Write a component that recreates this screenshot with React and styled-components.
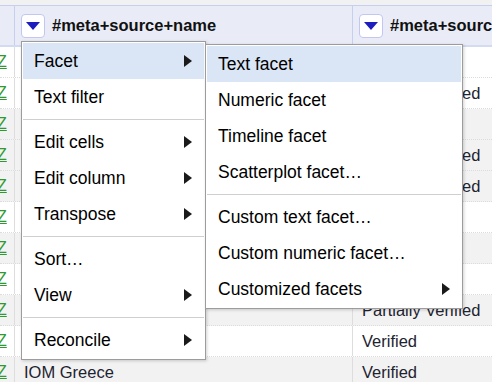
import React from 'react';
import styled, { createGlobalStyle } from 'styled-components';

const Global = createGlobalStyle`
  html, body { margin: 0; padding: 0; background: #fff; overflow: hidden; }
  body { font-family: "Liberation Sans", Arial, sans-serif; }
`;

const Page = styled.div`
  position: relative;
  width: 492px;
  height: 382px;
  overflow: hidden;
  background: #fff;
`;

const TopStrip = styled.div`
  height: 5px;
  background: #f1f1f1;
`;

const HeaderRow = styled.div`
  display: grid;
  grid-template-columns: 15px 338px 1fr;
  height: 42px;
  box-sizing: border-box;
  background: #e9ecf7;
  border-top: 1px solid #c6cff0;
  border-bottom: 2px solid #d3dbf3;
`;

const HeaderCell = styled.div`
  display: flex;
  align-items: center;
  gap: 7px;
  padding-left: 6px;
  border-right: ${p => (p.$last ? 'none' : '1px solid #c6cff0')};
  white-space: nowrap;
  overflow: hidden;
  font-weight: bold;
  font-size: 16.5px;
  color: #111;
`;

const DropButton = styled.span`
  flex: none;
  display: flex;
  align-items: center;
  justify-content: center;
  width: 24px;
  height: 24px;
  box-sizing: border-box;
  background: #fff;
  border: 1px solid #c3c6f2;
  border-radius: 4px;
`;

const Row = styled.div`
  display: grid;
  grid-template-columns: 15px 338px 1fr;
  height: 31px;
  box-sizing: border-box;
  background: ${p => (p.$grey ? '#f2f2f2' : '#fff')};
  border-bottom: 1px dotted #dcdcdc;
`;

const Cell = styled.div`
  display: flex;
  align-items: center;
  padding-left: ${p => (p.$flag ? '0' : '9px')};
  border-right: ${p => (p.$last ? 'none' : '1px solid #dddddd')};
  white-space: nowrap;
  overflow: hidden;
  font-size: 16.5px;
  color: #1e2330;
`;

const FlagLink = styled.span`
  margin-left: -3px;
  color: #2f9a2f;
  text-decoration: underline;
  font-size: 16px;
`;

const Menu = styled.div`
  position: absolute;
  left: ${p => p.$left}px;
  top: ${p => p.$top}px;
  width: ${p => p.$width}px;
  box-sizing: border-box;
  padding: 1px;
  background: #fff;
  border: 1px solid #9c9c9c;
  box-shadow: 1px 1px 3px rgba(0, 0, 0, 0.18);
  z-index: ${p => p.$z};
`;

const Item = styled.div`
  display: flex;
  align-items: center;
  justify-content: space-between;
  height: 36px;
  padding: 0 ${p => p.$padRight}px 0 11px;
  background: ${p => (p.$active ? '#dae5f5' : 'transparent')};
  font-size: 17.5px;
  color: #000;
  white-space: nowrap;
`;

const Arrow = styled.span`
  width: 0;
  height: 0;
  border-left: 8px solid #1a1a1a;
  border-top: 6px solid transparent;
  border-bottom: 6px solid transparent;
`;

const Separator = styled.div`
  height: 1px;
  margin: 4px 0;
  background: #cfcfcf;
`;

const rows = [
  { grey: false, c3: 'Verified' },
  { grey: false, c3: 'Partially Verified' },
  { grey: true, c3: 'Verified' },
  { grey: true, c3: 'Partially Verified' },
  { grey: true, c3: 'Partially Verified' },
  { grey: false, c3: 'Verified' },
  { grey: true, c3: 'Verified' },
  { grey: false, c3: 'Verified' },
  { grey: true, c3: 'Partially Verified' },
  { grey: false, c3: 'Verified' },
  { grey: true, c3: 'Verified' },
];

const mainItems = [
  { label: 'Facet', sub: true, active: true },
  { label: 'Text filter' },
  'sep',
  { label: 'Edit cells', sub: true },
  { label: 'Edit column', sub: true },
  { label: 'Transpose', sub: true },
  'sep',
  { label: 'Sort…' },
  { label: 'View', sub: true },
  'sep',
  { label: 'Reconcile', sub: true },
];

const facetItems = [
  { label: 'Text facet', active: true },
  { label: 'Numeric facet' },
  { label: 'Timeline facet' },
  { label: 'Scatterplot facet…' },
  'sep',
  { label: 'Custom text facet…' },
  { label: 'Custom numeric facet…' },
  { label: 'Customized facets', sub: true },
];

const TriangleIcon = () => (
  <svg width="14" height="8" viewBox="0 0 14 8">
    <path d="M0 0 H14 L7 8 Z" fill="#1d1dbf" />
  </svg>
);

function MenuList({ items, padRight }) {
  return items.map((it, i) =>
    it === 'sep' ? (
      <Separator key={i} />
    ) : (
      <Item key={i} $active={it.active} $padRight={padRight}>
        <span>{it.label}</span>
        {it.sub && <Arrow />}
      </Item>
    )
  );
}

export default function App() {
  return (
    <Page>
      <Global />
      <TopStrip />
      <HeaderRow>
        <HeaderCell />
        <HeaderCell>
          <DropButton>
            <TriangleIcon />
          </DropButton>
          #meta+source+name
        </HeaderCell>
        <HeaderCell $last>
          <DropButton>
            <TriangleIcon />
          </DropButton>
          #meta+source+type
        </HeaderCell>
      </HeaderRow>
      {rows.map((r, i) => (
        <Row key={i} $grey={r.grey}>
          <Cell $flag>
            <FlagLink>Z</FlagLink>
          </Cell>
          <Cell>IOM Greece</Cell>
          <Cell $last>{r.c3}</Cell>
        </Row>
      ))}
      <Menu $left={21} $top={41} $width={185} $z={2}>
        <MenuList items={mainItems} padRight={12} />
      </Menu>
      <Menu $left={205} $top={44} $width={258} $z={3}>
        <MenuList items={facetItems} padRight={11} />
      </Menu>
    </Page>
  );
}
